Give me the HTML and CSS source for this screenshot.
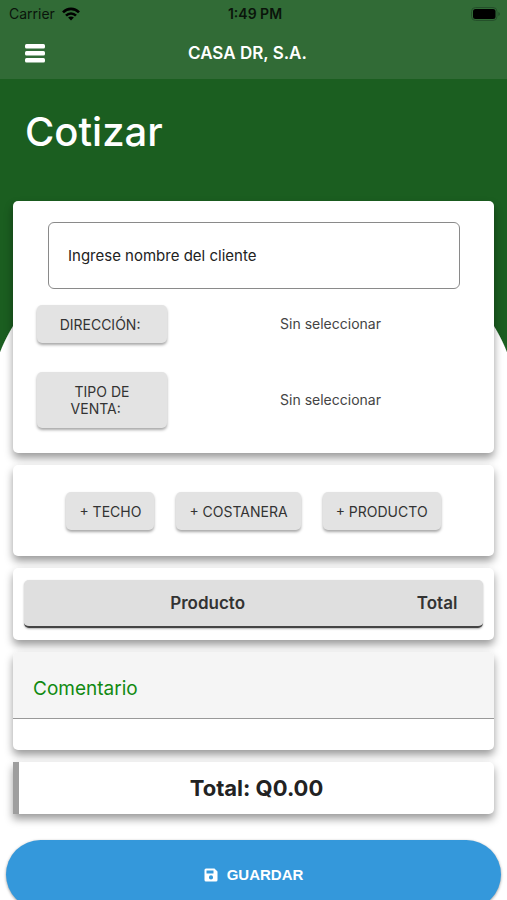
FILE: index.html
```html
<!DOCTYPE html>
<html lang="es">
<head>
<meta charset="utf-8">
<meta name="viewport" content="width=device-width, initial-scale=1">
<title>Cotizar</title>
<link rel="stylesheet" href="styles.css">
</head>
<body>
<header class="topbar">
  <div class="status">
    <div class="status-left">
      <span>Carrier</span>
      <svg class="wifi" viewBox="0 0 18 14" aria-hidden="true">
        <g fill="none" stroke="#000" stroke-width="2.6">
          <path d="M1 5.400C5.400.7 12.600.7 17 5.400"/>
          <path d="M4 8.700C6.800 5.800 11.200 5.800 14 8.700"/>
        </g>
        <path d="M9 13.500L6.100 10.500C7.700 9 10.300 9 11.900 10.500Z"/>
      </svg>
    </div>
    <span class="time">1:49 PM</span>
    <div class="status-right">
      <svg class="battery" viewBox="0 0 30 14" aria-hidden="true">
        <rect x=".5" y=".5" width="25.500" height="13" rx="4" fill="none" stroke="#24502a"/>
        <rect x="2" y="2" width="22.500" height="10" rx="2.500"/>
        <path d="M27.500 5v4c1.600-.6 1.600-3.400 0-4z" fill="#1c4522"/>
      </svg>
    </div>
  </div>
  <div class="nav">
    <button class="menu" type="button" aria-label="Menú">
      <svg viewBox="0 0 20 19" aria-hidden="true" fill="#fff">
        <rect width="20" height="4.500" rx="1.500"/>
        <rect y="7" width="20" height="4.500" rx="1.500"/>
        <rect y="14" width="20" height="4.500" rx="1.500"/>
      </svg>
    </button>
    <span class="brand">CASA DR, S.A.</span>
  </div>
</header>
<main class="page">
  <h1>Cotizar</h1>
  <form class="cards">
    <section class="card client">
      <input class="client-name" type="text" placeholder="Ingrese nombre del cliente" aria-label="Ingrese nombre del cliente">
      <div class="choice">
        <button class="btn wide" type="button"><span>DIRECCIÓN:&nbsp;</span></button>
        <span class="value">Sin seleccionar</span>
      </div>
      <div class="choice">
        <button class="btn wide tall" type="button"><span>&nbsp;TIPO DE&nbsp;<br>VENTA:</span></button>
        <span class="value">Sin seleccionar</span>
      </div>
    </section>
    <section class="card actions">
      <button class="btn" type="button">+ TECHO</button>
      <button class="btn" type="button">+ COSTANERA</button>
      <button class="btn" type="button">+ PRODUCTO</button>
    </section>
    <section class="card products">
      <table>
        <thead><tr><th class="product">Producto</th><th class="amount">Total</th></tr></thead>
      </table>
    </section>
    <section class="card comment">
      <input type="text" placeholder="Comentario" aria-label="Comentario">
    </section>
    <section class="card total">Total: Q0.00</section>
    <button class="save" type="submit">
      <svg viewBox="0 0 14 14" aria-hidden="true">
        <path fill="#fff" fill-rule="evenodd" d="M2 .5h8.500L13.500 3.500V12a1.500 1.500 0 0 1-1.500 1.500H2A1.500 1.500 0 0 1 .5 12V2A1.500 1.500 0 0 1 2 .5zM2.500 2.500v3h7v-3zM7 7.300a2.100 2.100 0 1 0 0 4.200a2.100 2.100 0 0 0 0-4.200z"/>
      </svg>
      <span>GUARDAR</span>
    </button>
  </form>
</main>
</body>
</html>
```
FILE: styles.css
```css
* {
  box-sizing: border-box;
}

html {
  scrollbar-width: none;
}

body {
  margin: 0;
  background: #fff;
  color: #333;
  font-family: Inter, "Liberation Sans", sans-serif;
  font-size: 14px;
}

button,
input {
  font: inherit;
  color: inherit;
  margin: 0;
}

.topbar {
  background: #316b36;
}

.status {
  display: grid;
  grid-template-columns: 1fr auto 1fr;
  align-items: center;
  height: 27px;
  padding: 0 6px 0 9px;
  color: #0a140b;
}

.status-left {
  display: flex;
  align-items: center;
  gap: 7px;
}

.wifi {
  width: 18px;
  height: 14px;
}

.time {
  font-weight: 600;
}

.status-right {
  display: flex;
  justify-content: flex-end;
}

.battery {
  width: 30px;
  height: 14px;
}

.nav {
  display: grid;
  grid-template-columns: 1fr auto 1fr;
  align-items: center;
  height: 52px;
  padding: 0 37px 0 25px;
}

.menu {
  width: 20px;
  height: 20px;
  padding: 0;
  border: 0;
  background: none;
}

.menu svg {
  display: block;
  width: 20px;
  height: 19px;
}

.brand {
  color: #fff;
  font-size: 17px;
  font-weight: 600;
}

.page {
  padding-top: 27px;
  background: radial-gradient(52% 190px at 50% 324px, #fff 99.6%, #1b5e20 100%) no-repeat;
  background-size: 100% 274px;
}

h1 {
  margin: 0 25px;
  color: #fff;
  font-size: 40px;
  font-weight: 500;
  line-height: 52px;
}

.cards {
  display: flex;
  flex-direction: column;
  gap: 12px;
  margin-top: 43px;
  padding: 0 13px;
}

.card {
  border-radius: 5px;
  background: #fff;
  box-shadow: 0 5px 9px rgba(0, 0, 0, 0.4);
}

.client {
  padding: 21px 0 25px 24px;
}

.client-name {
  display: block;
  width: calc(100% - 45px);
  height: 67px;
  margin: 0 0 16px 11px;
  padding: 0 19px;
  border: 1px solid #8a8a8a;
  border-radius: 6px;
  background: #fff;
  font-size: 15px;
}

.client-name::placeholder {
  color: #222;
  opacity: 1;
}

.choice {
  display: flex;
  align-items: center;
}

.choice + .choice {
  margin-top: 29px;
}

.value {
  flex: 1;
  padding-bottom: 2px;
  text-align: center;
  color: #444;
}

.btn {
  height: 38px;
  padding: 0 13px;
  border: 0;
  border-radius: 5px;
  background: #e3e3e3;
  box-shadow: 0 2px 3px rgba(0, 0, 0, 0.35);
  line-height: 17px;
}

.wide {
  width: 130px;
}

.wide span {
  display: inline-block;
  text-align: left;
}

.tall {
  height: 56px;
}

.actions {
  display: flex;
  align-items: center;
  justify-content: center;
  gap: 22px;
  padding: 27px 0 26px;
}

.products {
  padding: 12px 11px;
}

.products table {
  width: 100%;
  height: 48px;
  border-collapse: separate;
  border-spacing: 0;
  border-bottom: 2px solid #444;
  border-radius: 5px;
  background: #dfdfdf;
  box-shadow: 0 1px 2px rgba(0, 0, 0, 0.3);
  font-size: 17px;
}

.products th {
  padding: 0;
  font-weight: 600;
}

.product {
  width: 80%;
}

.amount {
  width: 20%;
}

.comment {
  padding-bottom: 31px;
}

.comment input {
  display: block;
  width: 100%;
  height: 67px;
  padding: 6px 20px 0;
  border: 0;
  border-bottom: 1px solid #999;
  border-radius: 5px 5px 0 0;
  background: #f5f5f5;
  font-size: 19px;
}

.comment input::placeholder {
  color: #118a11;
  opacity: 1;
}

.total {
  padding: 12px 0;
  border-left: 6px solid #9e9e9e;
  border-radius: 0 5px 5px 0;
  color: #222;
  font-size: 22px;
  font-weight: 700;
  line-height: 28px;
  text-align: center;
}

.save {
  display: flex;
  align-items: center;
  justify-content: center;
  gap: 9px;
  height: 69px;
  margin: 14px -7px 0;
  border: 0;
  border-radius: 35px;
  background: #3498db;
  box-shadow: 0 1px 3px rgba(0, 0, 0, 0.4);
  color: #fff;
  font-family: "Liberation Sans", sans-serif;
  font-size: 15px;
  font-weight: 700;
}

.save svg {
  width: 14px;
  height: 14px;
}
```
